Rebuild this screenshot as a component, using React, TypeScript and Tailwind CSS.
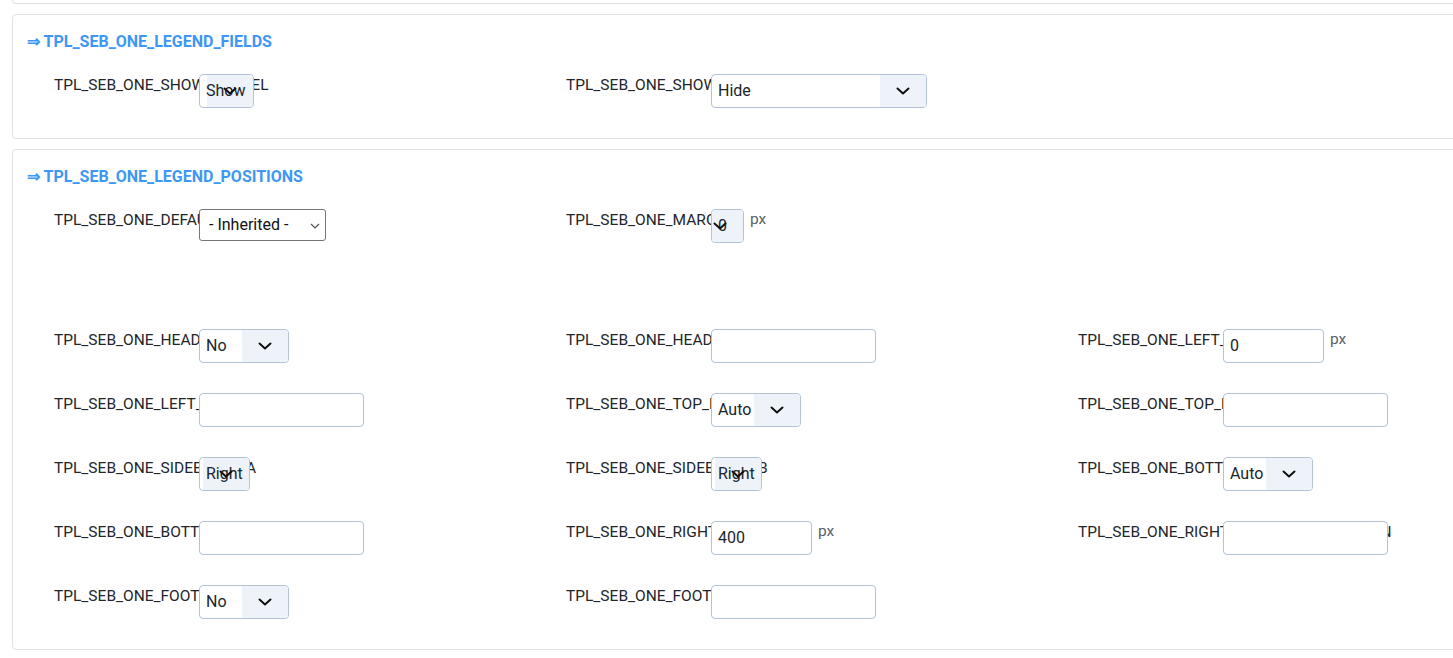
import React from 'react';

const BORDER = 'border-[#b3c1d9]';

const Chevron: React.FC<{ className?: string }> = ({ className }) => (
  <svg width="14" height="8" viewBox="0 0 14 8" className={className} fill="none">
    <path d="M1.5 1.5 L7 6.5 L12.5 1.5" stroke="#111" strokeWidth="2" strokeLinecap="round" strokeLinejoin="round" />
  </svg>
);

// custom styled select (joomla atum look)
const FancySelect: React.FC<{ value: string; width: string }> = ({ value, width }) => (
  <div className={`relative h-[34px] ${width} shrink-0 overflow-hidden rounded-[4px] border ${BORDER} bg-white`}>
    <div className="absolute right-0 top-0 bottom-0 w-[46px] bg-[#eef3fa]" />
    <span className="relative block whitespace-nowrap pl-[6px] text-[16px] leading-[32px] text-[#212529]">{value}</span>
    <Chevron className="absolute right-[16px] top-[12px]" />
  </div>
);

const NativeSelect: React.FC<{ value: string }> = ({ value }) => (
  <div className="relative flex h-[32px] w-[127px] shrink-0 items-center rounded-[3px] border border-[#767676] bg-white pl-[9px]">
    <span className="text-[16px] text-[#111]">{value}</span>
    <svg width="10" height="6" viewBox="0 0 10 6" className="absolute right-[5px] top-[13px]" fill="none">
      <path d="M1 1 L5 5 L9 1" stroke="#555" strokeWidth="1.2" />
    </svg>
  </div>
);

const TextInput: React.FC<{ value?: string; width: string }> = ({ value = '', width }) => (
  <div className={`h-[34px] ${width} shrink-0 rounded-[4px] border ${BORDER} bg-white pl-[6px] text-[16px] leading-[31px] text-[#212529]`}>
    {value}
  </div>
);

const Field: React.FC<{ label: string; children: React.ReactNode; unit?: string }> = ({ label, children, unit }) => (
  <div className="flex items-start">
    <div className="w-[145px] shrink-0 whitespace-nowrap text-[15.5px] leading-[23px] text-[#22262a]">{label}</div>
    <div className="relative z-10 flex items-start">
      {children}
      {unit && <span className="ml-[6px] text-[15.5px] leading-[21px] text-[#5a6169]">{unit}</span>}
    </div>
  </div>
);

const Row: React.FC<{ children: React.ReactNode }> = ({ children }) => (
  <div className="grid h-[64px] grid-cols-[512px_512px_512px]">{children}</div>
);

const Card: React.FC<{ title: string; children: React.ReactNode }> = ({ title, children }) => (
  <div className="mt-[10px] ml-[12px] w-[1480px] rounded-[4px] border border-[#dee2e6] bg-white pt-[16px] pl-[14px]">
    <h3 className="h-[22px] text-[16px] font-bold leading-[22px] text-[#3d97f5]">⇒ {title}</h3>
    <div className="pt-[21px] pl-[27px]">{children}</div>
  </div>
);

export default function App() {
  return (
    <div className="h-[658px] w-[1453px] overflow-hidden bg-white font-['Roboto',sans-serif]">
      <div className="ml-[12px] h-[4px] w-[1480px] rounded-b-[4px] border-x border-b border-[#dee2e6]" />

      <Card title="TPL_SEB_ONE_LEGEND_FIELDS">
        <Row>
          <Field label="TPL_SEB_ONE_SHOW_KERNEL">
            <FancySelect value="Show" width="w-[55px]" />
          </Field>
          <Field label="TPL_SEB_ONE_SHOW_DESCRIPTION">
            <FancySelect value="Hide" width="w-[216px]" />
          </Field>
        </Row>
      </Card>

      <Card title="TPL_SEB_ONE_LEGEND_POSITIONS">
        <Row>
          <Field label="TPL_SEB_ONE_DEFAULT_POSITION">
            <NativeSelect value="- Inherited -" />
          </Field>
          <Field label="TPL_SEB_ONE_MARGIN" unit="px">
            <FancySelect value="0" width="w-[33px]" />
          </Field>
        </Row>
        <div className="h-[56px]" />
        <Row>
          <Field label="TPL_SEB_ONE_HEADER">
            <FancySelect value="No" width="w-[90px]" />
          </Field>
          <Field label="TPL_SEB_ONE_HEADER_HEIGHT">
            <TextInput width="w-[165px]" />
          </Field>
          <Field label="TPL_SEB_ONE_LEFT_MARGIN" unit="px">
            <TextInput value="0" width="w-[101px]" />
          </Field>
        </Row>
        <Row>
          <Field label="TPL_SEB_ONE_LEFT_WIDTH">
            <TextInput width="w-[165px]" />
          </Field>
          <Field label="TPL_SEB_ONE_TOP_MODE">
            <FancySelect value="Auto" width="w-[90px]" />
          </Field>
          <Field label="TPL_SEB_ONE_TOP_HEIGHT">
            <TextInput width="w-[165px]" />
          </Field>
        </Row>
        <Row>
          <Field label="TPL_SEB_ONE_SIDEBAR_P_A">
            <FancySelect value="Right" width="w-[51px]" />
          </Field>
          <Field label="TPL_SEB_ONE_SIDEBAR_P_B">
            <FancySelect value="Right" width="w-[51px]" />
          </Field>
          <Field label="TPL_SEB_ONE_BOTTOM">
            <FancySelect value="Auto" width="w-[90px]" />
          </Field>
        </Row>
        <Row>
          <Field label="TPL_SEB_ONE_BOTTOM_HEIGHT">
            <TextInput width="w-[165px]" />
          </Field>
          <Field label="TPL_SEB_ONE_RIGHT_WIDTH" unit="px">
            <TextInput value="400" width="w-[101px]" />
          </Field>
          <Field label="TPL_SEB_ONE_RIGHT_SIDEBARS_DIRECTION">
            <TextInput width="w-[165px]" />
          </Field>
        </Row>
        <Row>
          <Field label="TPL_SEB_ONE_FOOTER">
            <FancySelect value="No" width="w-[90px]" />
          </Field>
          <Field label="TPL_SEB_ONE_FOOTER_HEIGHT">
            <TextInput width="w-[165px]" />
          </Field>
        </Row>
      </Card>
    </div>
  );
}
